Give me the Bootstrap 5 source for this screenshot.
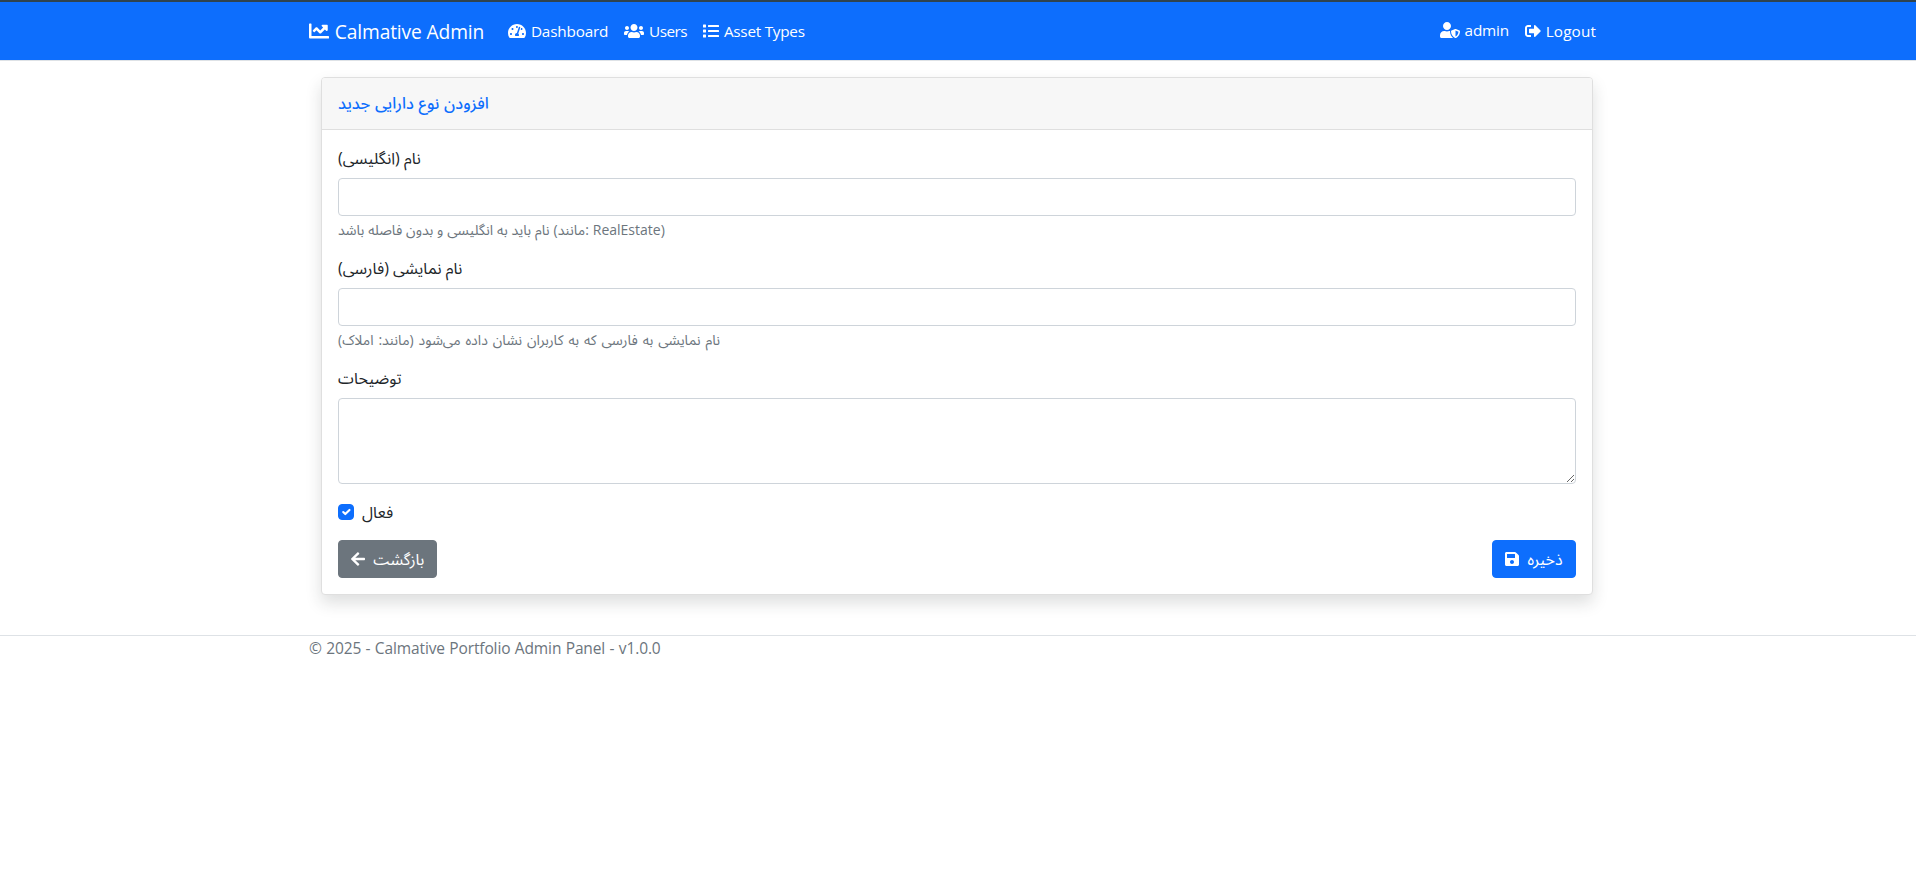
<!DOCTYPE html>
<html lang="en">
<head>
<meta charset="utf-8">
<title>Calmative Admin</title>
<link href="https://cdn.jsdelivr.net/npm/bootstrap@5.3.0/dist/css/bootstrap.min.css" rel="stylesheet">
<script src="https://cdn.jsdelivr.net/npm/bootstrap@5.3.0/dist/js/bootstrap.bundle.min.js" defer></script>
<style>
  body { font-family: "Open Sans", "Noto Sans Arabic", "DejaVu Sans", sans-serif; font-size: 16px; color: #212529; border-top: 2px solid #2f434e; padding-right: 2px; }
  .topbar { height: 59px; background: #0d6efd; margin-right: -2px; padding-right: 2px; border-bottom: 1px solid #dee2e6; }
  .ic { height: 1em; fill: currentColor; display: inline-block; vertical-align: -.125em; overflow: visible; }
  .topbar a { color: #fff; text-decoration: none; white-space: nowrap; line-height: 24px; }
  .lbl { font-size: 15.3px; letter-spacing: -.17px; line-height: 24px; display: inline-block; }
  .topbar .lbl { margin-left: .6px; }
  .topbar .brand-lbl { font-size: 19.2px; letter-spacing: -.13px; }
  .brand { padding-top: 1px; }
  .topbar .users-lbl { letter-spacing: -.5px; }
  .topbar .types-lbl { letter-spacing: -.25px; }
  .topbar .logout-lbl { letter-spacing: .12px; }
  .user-link { padding-bottom: 2px; }
  .account { padding-right: 9px; }
  .panel { border-radius: 4px; border-color: #dfdfdf; --bs-card-inner-border-radius: 3px; }
  .panel .card-header { height: 52px; background: #f7f7f7; border-color: #dfdfdf; }
  .panel-title { font-weight: 500; font-size: 16.1px; word-spacing: .5px; color: #0d6efd; }
  .form-control { border-color: #ced4da; border-radius: 4px; height: 38px; }
  textarea.form-control { height: 86px; }
  .form-label { line-height: 24px; display: block; }
  .hint { font-size: 14px; line-height: 20px; color: #6c757d; margin-top: 4px; word-spacing: .3px; }
  .hint-wide { word-spacing: 1.3px; }
  .btn { border-radius: 4px; height: 38px; white-space: nowrap; }
  .btn-back { width: 99px; background: #6c757d; }
  .btn-save { width: 84px; background: #0d6efd; }
  .btn-back span { font-size: 15.8px; }
  .foot { border-top: 1px solid #dee2e6; margin-right: -2px; padding-right: 2px; color: #6c757d; }
  .foot .lbl { font-size: 15.5px; letter-spacing: -.12px; word-spacing: .5px; }
</style>
</head>
<body>
<svg width="0" height="0" class="position-absolute"><defs>
<symbol id="chart" viewBox="0 0 512 512"><path d="M496 384H64V80c0-8.84-7.16-16-16-16H16C7.16 64 0 71.16 0 80v336c0 17.67 14.33 32 32 32h464c8.84 0 16-7.16 16-16v-32c0-8.84-7.16-16-16-16zM464 96H345.94c-21.38 0-32.09 25.85-16.97 40.97l32.4 32.4L288 242.75l-73.37-73.37c-12.5-12.5-32.76-12.5-45.25 0l-68.69 68.69c-6.25 6.25-6.25 16.38 0 22.63l22.62 22.62c6.25 6.25 16.38 6.25 22.63 0L192 237.25l73.37 73.37c12.5 12.5 32.76 12.5 45.25 0l96-96 32.4 32.4c15.12 15.12 40.97 4.41 40.97-16.97V112c.01-8.84-7.15-16-15.99-16z"/></symbol>
<symbol id="gauge" viewBox="0 0 576 512"><path d="M288 32C128.94 32 0 160.94 0 320c0 52.8 14.25 102.26 39.06 144.8 5.61 9.62 16.3 15.2 27.44 15.2h443c11.14 0 21.83-5.58 27.44-15.2C561.75 422.26 576 372.8 576 320c0-159.06-128.94-288-288-288zm0 64c14.71 0 26.58 10.13 30.32 23.65-1.11 2.26-2.64 4.23-3.45 6.67l-9.22 27.67c-5.13 3.49-10.97 6.01-17.64 6.01-17.67 0-32-14.33-32-32S270.33 96 288 96zM96 384c-17.67 0-32-14.33-32-32s14.33-32 32-32 32 14.33 32 32-14.33 32-32 32zm48-160c-17.67 0-32-14.33-32-32s14.33-32 32-32 32 14.33 32 32-14.33 32-32 32zm246.77-72.41l-61.33 184C343.13 347.33 352 364.54 352 384c0 11.72-3.38 22.55-8.88 32H232.88c-5.5-9.45-8.88-20.28-8.88-32 0-33.94 26.5-61.43 59.9-63.59l61.34-184.01c4.17-12.56 17.73-19.45 30.36-15.17 12.57 4.19 19.35 17.79 15.17 30.36zm14.66 57.2l15.52-46.55c3.47-1.29 7.13-2.23 11.05-2.23 17.67 0 32 14.33 32 32s-14.33 32-32 32c-11.38-.01-20.89-6.28-26.57-15.22zM480 384c-17.67 0-32-14.33-32-32s14.33-32 32-32 32 14.33 32 32-14.33 32-32 32z"/></symbol>
<symbol id="users" viewBox="0 0 640 512"><path d="M96 224c35.3 0 64-28.7 64-64s-28.7-64-64-64-64 28.7-64 64 28.7 64 64 64zm448 0c35.3 0 64-28.7 64-64s-28.7-64-64-64-64 28.7-64 64 28.7 64 64 64zm32 32h-64c-17.6 0-33.5 7.1-45.1 18.6 40.3 22.1 68.9 62 75.1 109.4h66c17.7 0 32-14.3 32-32v-32c0-35.3-28.7-64-64-64zm-256 0c61.9 0 112-50.1 112-112S381.9 32 320 32 208 82.1 208 144s50.1 112 112 112zm76.8 32h-8.3c-20.8 10-43.9 16-68.5 16s-47.6-6-68.5-16h-8.3C179.6 288 128 339.6 128 403.2V432c0 26.5 21.5 48 48 48h288c26.5 0 48-21.5 48-48v-28.8c0-63.6-51.6-115.2-115.2-115.2zm-223.7-13.4C161.5 263.1 145.6 256 128 256H64c-35.3 0-64 28.7-64 64v32c0 17.7 14.3 32 32 32h65.9c6.3-47.4 34.9-87.3 75.2-109.4z"/></symbol>
<symbol id="list" viewBox="0 0 512 512"><rect x="0" y="48" width="96" height="96" rx="16"/><rect x="0" y="208" width="96" height="96" rx="16"/><rect x="0" y="368" width="96" height="96" rx="16"/><rect x="160" y="64" width="352" height="64" rx="16"/><rect x="160" y="224" width="352" height="64" rx="16"/><rect x="160" y="384" width="352" height="64" rx="16"/></symbol>
<symbol id="shield" viewBox="0 0 640 512"><path d="M622.3 271.1l-115.2-45c-4.1-1.6-12.6-3.7-22.2 0l-115.2 45c-10.7 4.2-17.7 14-17.7 24.9 0 111.6 68.7 188.8 132.9 213.9 9.6 3.7 18 1.6 22.2 0C558.4 489.9 640 420.5 640 296c0-10.9-7-20.7-17.7-24.9zM496 462.4V273.3l95.5 37.3c-5.6 87.1-60.9 135.4-95.5 151.8zM224 256c70.7 0 128-57.3 128-128S294.7 0 224 0 96 57.3 96 128s57.3 128 128 128zm96 40c0-2.5.8-4.8 1.1-7.2-2.5-.1-4.9-.8-7.5-.8h-16.7c-22.2 10.2-46.9 16-72.9 16s-50.6-5.8-72.9-16h-16.7C60.2 288 0 348.2 0 422.4V464c0 26.5 21.5 48 48 48h352c6.8 0 13.3-1.5 19.2-4-54-42.9-99.2-116.7-99.2-212z"/></symbol>
<symbol id="logout" viewBox="0 0 512 512"><path d="M497 273L329 441c-15 15-41 4.5-41-17v-96H152c-13.3 0-24-10.7-24-24v-96c0-13.3 10.7-24 24-24h136V88c0-21.4 25.9-32 41-17l168 168c9.3 9.4 9.3 24.6 0 34zM192 436v-40c0-6.6-5.4-12-12-12H96c-17.7 0-32-14.3-32-32V160c0-17.7 14.3-32 32-32h84c6.6 0 12-5.4 12-12V76c0-6.6-5.4-12-12-12H96c-53 0-96 43-96 96v192c0 53 43 96 96 96h84c6.6 0 12-5.4 12-12z"/></symbol>
<symbol id="save" viewBox="0 0 448 512"><path d="M433.941 129.941l-83.882-83.882A48 48 0 0 0 316.118 32H48C21.49 32 0 53.49 0 80v352c0 26.51 21.49 48 48 48h352c26.51 0 48-21.49 48-48V163.882a48 48 0 0 0-14.059-33.941zM224 416c-35.346 0-64-28.654-64-64 0-35.346 28.654-64 64-64s64 28.654 64 64c0 35.346-28.654 64-64 64zm96-304.52V212c0 6.627-5.373 12-12 12H76c-6.627 0-12-5.373-12-12V108c0-6.627 5.373-12 12-12h228.52c3.183 0 6.235 1.264 8.485 3.515l3.48 3.48A11.996 11.996 0 0 1 320 111.48z"/></symbol>
<symbol id="back" viewBox="0 0 448 512"><path d="M257.5 445.1l-22.2 22.2c-9.4 9.4-24.6 9.4-33.9 0L7 273c-9.4-9.4-9.4-24.6 0-33.9L201.4 44.7c9.4-9.4 24.6-9.4 33.9 0l22.2 22.2c9.5 9.5 9.3 25-.4 34.3L136.6 216H424c13.3 0 24 10.7 24 24v32c0 13.3-10.7 24-24 24H136.6l120.5 114.8c9.8 9.3 10 24.8.4 34.3z"/></symbol>
</defs></svg>
<header class="topbar mb-3">
  <nav class="container h-100 d-flex align-items-center">
    <a href="#" class="brand fs-5 me-4"><svg class="ic" width="20"><use href="#chart"/></svg> <span class="lbl brand-lbl">Calmative Admin</span></a>
    <a href="#" class="me-3"><svg class="ic" width="18"><use href="#gauge"/></svg> <span class="lbl">Dashboard</span></a>
    <a href="#" class="me-3"><svg class="ic" width="20"><use href="#users"/></svg> <span class="lbl users-lbl">Users</span></a>
    <a href="#"><svg class="ic" width="16"><use href="#list"/></svg> <span class="lbl types-lbl">Asset Types</span></a>
    <div class="account ms-auto d-flex align-items-center">
      <a href="#" class="user-link me-3"><svg class="ic" width="20"><use href="#shield"/></svg> <span class="lbl">admin</span></a>
      <a href="#"><svg class="ic" width="16"><use href="#logout"/></svg> <span class="lbl logout-lbl">Logout</span></a>
    </div>
  </nav>
</header>
<div class="container pb-3">
  <main class="container-fluid">
    <div class="card panel shadow mb-4">
      <div class="card-header d-flex align-items-center"><span class="panel-title">افزودن نوع دارایی جدید</span></div>
      <div class="card-body">
        <div class="mb-3">
          <label class="form-label" for="name">نام (انگلیسی)</label>
          <input class="form-control" id="name">
          <div class="hint">نام باید به انگلیسی و بدون فاصله باشد (مانند: RealEstate)</div>
        </div>
        <div class="mb-3">
          <label class="form-label" for="display">نام نمایشی (فارسی)</label>
          <input class="form-control" id="display">
          <div class="hint hint-wide">نام نمایشی به فارسی که به کاربران نشان داده می‌شود (مانند: املاک)</div>
        </div>
        <div class="mb-3">
          <label class="form-label" for="desc">توضیحات</label>
          <textarea class="form-control" id="desc"></textarea>
        </div>
        <div class="form-check mb-3">
          <input class="form-check-input" type="checkbox" checked id="active">
          <label class="form-check-label" for="active">فعال</label>
        </div>
        <div class="d-flex justify-content-between">
          <a href="#" class="btn btn-secondary btn-back"><svg class="ic me-1" width="14"><use href="#back"/></svg> <span>بازگشت</span></a>
          <button type="button" class="btn btn-primary btn-save"><svg class="ic me-1" width="14"><use href="#save"/></svg> <span>ذخیره</span></button>
        </div>
      </div>
    </div>
  </main>
</div>
<footer class="foot"><div class="container"><span class="lbl">© 2025 - Calmative Portfolio Admin Panel - v1.0.0</span></div></footer>
</body>
</html>
